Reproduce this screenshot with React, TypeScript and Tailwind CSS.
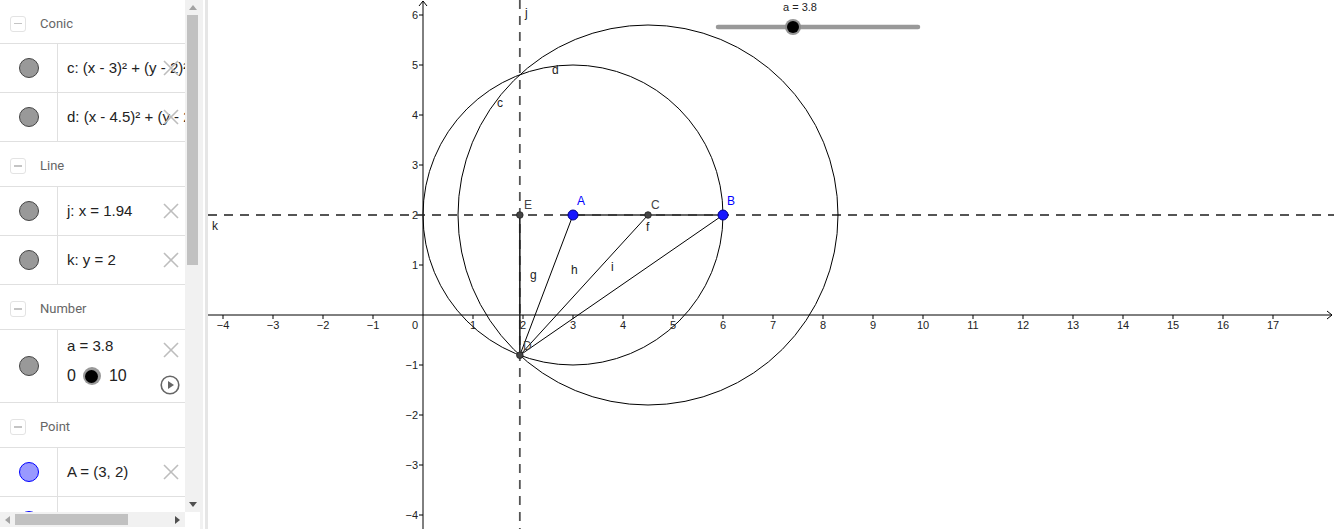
import React from "react";

const X = (u: number) => 423 + 50 * u;
const Y = (v: number) => 315 - 50 * v;

function CloseIcon() {
  return (
    <svg width="16" height="16" viewBox="0 0 16 16" className="block">
      <line x1="1" y1="1" x2="15" y2="15" stroke="#bdbdbd" strokeWidth="1.6" />
      <line x1="15" y1="1" x2="1" y2="15" stroke="#bdbdbd" strokeWidth="1.6" />
    </svg>
  );
}

function Marble({ fill, stroke }: { fill: string; stroke: string }) {
  return (
    <div
      className="w-[20px] h-[20px] rounded-full border"
      style={{ backgroundColor: fill, borderColor: stroke }}
    />
  );
}

function Header({ title, h = "h-[45px]" }: { title: string; h?: string }) {
  return (
    <div className={"flex items-center pt-[4px] border-b border-[#e0e0e0] shrink-0 " + (h === "h-[44px]" ? "h-[44px]" : "h-[45px]")}>
      <div className="ml-[10px] w-[16px] h-[16px] rounded-[3px] border border-[#e3e3e3] flex items-center justify-center">
        <div className="w-[8px] h-[1.5px] bg-[#c4c4c4]" />
      </div>
      <span className="ml-[14px] text-[13px] text-[#666]" style={{ fontFamily: "Roboto, sans-serif" }}>
        {title}
      </span>
    </div>
  );
}

function Row({ text, fill = "#999999", stroke = "#444444" }: { text: React.ReactNode; fill?: string; stroke?: string }) {
  return (
    <div className="relative flex h-[49px] border-b border-[#e0e0e0] shrink-0">
      <div className="w-[58px] flex items-center justify-center border-r border-[#e0e0e0] shrink-0">
        <Marble fill={fill} stroke={stroke} />
      </div>
      <div className="flex-1 flex items-center pl-[9px] whitespace-nowrap overflow-hidden text-[15px] text-[#222]">
        {text}
      </div>
      <div className="absolute right-[6px] top-[16px]">
        <CloseIcon />
      </div>
    </div>
  );
}

function Sidebar() {
  return (
    <div className="w-[200px] h-full flex flex-col shrink-0 bg-white" style={{ fontFamily: '"Liberation Sans", Arial, sans-serif' }}>
      <div className="flex h-[512px]">
        <div className="w-[185px] h-full overflow-hidden flex flex-col">
          <Header title="Conic" h="h-[44px]" />
          <Row text={<>c: (x - 3)² + (y - 2)² = 9</>} />
          <Row text={<>d: (x - 4.5)² + (y - 2)² = 14.44</>} />
          <Header title="Line" />
          <Row text={<>j: x = 1.94</>} />
          <Row text={<>k: y = 2</>} />
          <Header title="Number" />
          <div className="relative flex h-[73px] border-b border-[#e0e0e0] shrink-0">
            <div className="w-[58px] flex items-center justify-center border-r border-[#e0e0e0] shrink-0">
              <Marble fill="#999999" stroke="#444444" />
            </div>
            <div className="flex-1 flex flex-col pl-[9px] text-[#222]">
              <div className="mt-[6px] text-[15px] leading-[20px]">a = 3.8</div>
              <div className="mt-[10px] flex items-center text-[16px] leading-[20px]">
                <span>0</span>
                <div className="ml-[7px] w-[18px] h-[18px] rounded-full bg-[#999] flex items-center justify-center">
                  <div className="w-[13px] h-[13px] rounded-full bg-black" />
                </div>
                <span className="ml-[8px]">10</span>
              </div>
            </div>
            <div className="absolute right-[6px] top-[12px]">
              <CloseIcon />
            </div>
            <div className="absolute right-[5px] top-[45px]">
              <svg width="20" height="20" viewBox="0 0 20 20" className="block">
                <circle cx="10" cy="10" r="8.8" fill="none" stroke="#666" strokeWidth="1.6" />
                <polygon points="8,6 8,14 14,10" fill="#666" />
              </svg>
            </div>
          </div>
          <Header title="Point" />
          <Row text={<>A = (3, 2)</>} fill="#9999ff" stroke="#0000ff" />
          <Row text={<>B = (6, 2)</>} fill="#9999ff" stroke="#0000ff" />
        </div>
        <div className="w-[15px] h-full bg-[#f1f1f1] flex flex-col">
          <div className="h-[15px] flex items-center justify-center">
            <svg width="8" height="5" viewBox="0 0 8 5"><polygon points="0,5 8,5 4,0" fill="#a3a3a3" /></svg>
          </div>
          <div className="flex-1">
            <div className="ml-[2px] w-[11px] h-[250px] bg-[#c1c1c1]" />
          </div>
          <div className="h-[15px] flex items-center justify-center">
            <svg width="8" height="5" viewBox="0 0 8 5"><polygon points="0,0 8,0 4,5" fill="#505050" /></svg>
          </div>
        </div>
      </div>
      <div className="flex h-[15px]">
        <div className="w-[185px] h-full bg-[#f1f1f1] flex items-center">
          <div className="w-[15px] flex items-center justify-center">
            <svg width="5" height="8" viewBox="0 0 5 8"><polygon points="5,0 5,8 0,4" fill="#a3a3a3" /></svg>
          </div>
          <div className="flex-1 h-full flex items-center">
            <div className="w-[113px] h-[11px] bg-[#c1c1c1]" />
          </div>
          <div className="w-[15px] flex items-center justify-center">
            <svg width="5" height="8" viewBox="0 0 5 8"><polygon points="0,0 0,8 5,4" fill="#505050" /></svg>
          </div>
        </div>
        <div className="w-[15px] h-full bg-white" />
      </div>
    </div>
  );
}

function Graphics() {
  const xt: number[] = [];
  for (let i = -4; i <= 17; i++) if (i !== 0) xt.push(i);
  const yt: number[] = [];
  for (let i = -4; i <= 6; i++) if (i !== 0) yt.push(i);
  const lab = (n: number) => (n < 0 ? "\u2212" + Math.abs(n) : String(n));
  const D = { x: X(1.9367), y: Y(-0.805) };
  const E = { x: X(1.9367), y: Y(2) };
  const A = { x: X(3), y: Y(2) };
  const B = { x: X(6), y: Y(2) };
  const C = { x: X(4.5), y: Y(2) };
  const font = '"Liberation Sans", Arial, sans-serif';
  return (
    <svg width="1126" height="529" viewBox="208 0 1126 529" className="block shrink-0" style={{ fontFamily: font }}>
      <rect x="208" y="0" width="1126" height="529" fill="#ffffff" />
      {/* axes */}
      <line x1="208" y1="315" x2="1332" y2="315" stroke="#000" strokeWidth="1" />
      <polyline points="1327,311 1332,315 1327,319" fill="none" stroke="#000" strokeWidth="1" />
      <line x1="423" y1="529" x2="423" y2="1" stroke="#000" strokeWidth="1" />
      <polyline points="419,6 423,1 427,6" fill="none" stroke="#000" strokeWidth="1" />
      {xt.map((i) => (
        <g key={"x" + i}>
          <line x1={X(i)} y1="315" x2={X(i)} y2="319" stroke="#000" strokeWidth="1" />
          <text x={X(i)} y="329" fontSize="11" textAnchor="middle" fill="#222">{lab(i)}</text>
        </g>
      ))}
      {yt.map((i) => (
        <g key={"y" + i}>
          <line x1="419" y1={Y(i)} x2="423" y2={Y(i)} stroke="#000" strokeWidth="1" />
          <text x="418" y={Y(i) + 4} fontSize="11" textAnchor="end" fill="#222">{lab(i)}</text>
        </g>
      ))}
      <text x="418" y="329" fontSize="11" textAnchor="end" fill="#222">0</text>

      {/* dashed lines */}
      <line x1={E.x} y1="0" x2={E.x} y2="529" stroke="#555" strokeWidth="1.8" strokeDasharray="9 7" />
      <line x1="208" y1={Y(2)} x2="1334" y2={Y(2)} stroke="#555" strokeWidth="1.8" strokeDasharray="9 7" />

      {/* circles */}
      <circle cx={X(3)} cy={Y(2)} r="150" fill="none" stroke="#000" strokeWidth="1" />
      <circle cx={X(4.5)} cy={Y(2)} r="190" fill="none" stroke="#000" strokeWidth="1" />

      {/* segments */}
      <line x1={E.x} y1={E.y} x2={D.x} y2={D.y} stroke="#222" strokeWidth="1.6" />
      <line x1={A.x} y1={A.y} x2={B.x} y2={B.y} stroke="#333" strokeWidth="1.6" />
      <line x1={D.x} y1={D.y} x2={A.x} y2={A.y} stroke="#000" strokeWidth="1" />
      <line x1={D.x} y1={D.y} x2={C.x} y2={C.y} stroke="#000" strokeWidth="1" />
      <line x1={D.x} y1={D.y} x2={B.x} y2={B.y} stroke="#000" strokeWidth="1" />

      {/* points */}
      <circle cx={E.x} cy={E.y} r="3.3" fill="#444" stroke="#222" strokeWidth="0.8" />
      <circle cx={C.x} cy={C.y} r="3.3" fill="#444" stroke="#222" strokeWidth="0.8" />
      <circle cx={D.x} cy={D.y} r="3.3" fill="#444" stroke="#222" strokeWidth="0.8" />
      <circle cx={A.x} cy={A.y} r="5" fill="#1515ff" stroke="#00008b" strokeWidth="1" />
      <circle cx={B.x} cy={B.y} r="5" fill="#1515ff" stroke="#00008b" strokeWidth="1" />

      {/* labels */}
      <text x="525" y="17" fontSize="12" fill="#222">j</text>
      <text x="212" y="230" fontSize="12" fill="#222">k</text>
      <text x="497" y="107" fontSize="12" fill="#222">c</text>
      <text x="552" y="74" fontSize="12" fill="#222">d</text>
      <text x="524" y="209" fontSize="12" fill="#444">E</text>
      <text x="577" y="205" fontSize="12" fill="#0000ff">A</text>
      <text x="651" y="209" fontSize="12" fill="#444">C</text>
      <text x="727" y="205" fontSize="12" fill="#0000ff">B</text>
      <text x="646" y="231" fontSize="12" fill="#222">f</text>
      <text x="530" y="279" fontSize="12" fill="#222">g</text>
      <text x="571" y="274" fontSize="12" fill="#222">h</text>
      <text x="611" y="271" fontSize="12" fill="#222">i</text>
      <text x="523" y="350" fontSize="12" fill="#444">D</text>

      {/* slider */}
      <text x="800" y="11" fontSize="11" textAnchor="middle" fill="#222">a = 3.8</text>
      <line x1="718" y1="27" x2="918" y2="27" stroke="#999" strokeWidth="4.5" strokeLinecap="round" />
      <circle cx="793" cy="27" r="8" fill="#8a8a8a" opacity="0.9" />
      <circle cx="793" cy="27" r="6" fill="#000" />
    </svg>
  );
}

export default function App() {
  return (
    <div className="w-[1334px] h-[529px] flex bg-white overflow-hidden">
      <Sidebar />
      <div className="w-[8px] h-full flex shrink-0">
        <div className="w-[3px] h-full bg-[#f1f1f1]" />
        <div className="w-[2px] h-full bg-white" />
        <div className="w-[3px] h-full bg-[#e6e6e6]" />
      </div>
      <Graphics />
    </div>
  );
}
